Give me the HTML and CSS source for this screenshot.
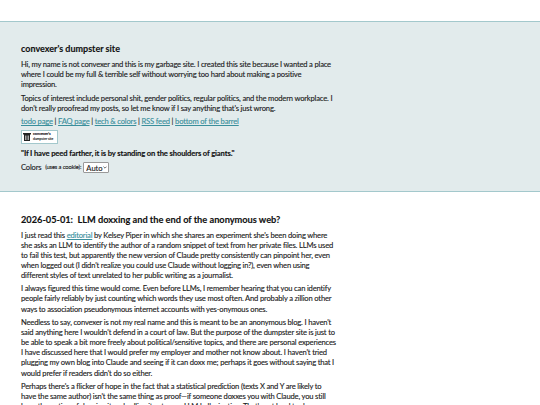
FILE: index.html
```
<!DOCTYPE html>
<html lang="en">
<head>
<meta charset="utf-8">
<title>convexer's dumpster site</title>
<link rel="stylesheet" href="styles.css">
</head>
<body>
<header class="banner">
  <div class="column">
    <h1>convexer's dumpster site</h1>
    <p>Hi, my name is not convexer and this is my garbage site. I created this site because I wanted a place where I could be my full &amp; terrible self without worrying too hard about making a positive impression.</p>
    <p>Topics of interest include personal shit, gender politics, regular politics, and the modern workplace. I don't really proofread my posts, so let me know if I say anything that's just wrong.</p>
    <p><a href="#">todo page</a> | <a href="#">FAQ page</a> | <a href="#">tech &amp; colors</a> | <a href="#">RSS feed</a> | <a href="#">bottom of the barrel</a></p>
    <div class="badge">
      <svg class="badge-icon" viewBox="0 0 8 9" aria-hidden="true"><path d="M0 1h8v1.500H0zM1 2.500h6V9H1z" fill="#222"/><path d="M2.500 3.500v4.500M4 3.500v4.500M5.500 3.500v4.500" stroke="#fff" stroke-width=".6"/></svg>
      <span class="badge-text"><b>convexer's</b><span>dumpster site</span></span>
    </div>
    <p class="motto">"If I have peed farther, it is by standing on the shoulders of giants."</p>
    <p class="colors">Colors <small>(uses a cookie):</small> <span class="picker"><select><option>Auto</option></select><svg class="chevron" viewBox="0 0 6 4" aria-hidden="true"><path d="M.7.7 3 3 5.300.7" fill="none" stroke="#222" stroke-width="1"/></svg></span></p>
  </div>
</header>
<main class="column post">
  <h2>2026-05-01:&nbsp; LLM doxxing and the end of the anonymous web?</h2>
  <p>I just read this <a href="#">editorial</a> by Kelsey Piper in which she shares an experiment she's been doing where she asks an LLM to identify the author of a random snippet of text from her private files. LLMs used to fail this test, but apparently the new version of Claude pretty consistently can pinpoint her, even when logged out (I didn't realize you could use Claude without logging in?), even when using different styles of text unrelated to her public writing as a journalist.</p>
  <p>I always figured this time would come. Even before LLMs, I remember hearing that you can identify people fairly reliably by just counting which words they use most often. And probably a zillion other ways to association pseudonymous internet accounts with yes-onymous ones.</p>
  <p>Needless to say, convexer is not my real name and this is meant to be an anonymous blog. I haven't said anything here I wouldn't defend in a court of law. But the purpose of the dumpster site is just to be able to speak a bit more freely about political/sensitive topics, and there are personal experiences I have discussed here that I would prefer my employer and mother not know about. I haven't tried plugging my own blog into Claude and seeing if it can doxx me; perhaps it goes without saying that I would prefer if readers didn't do so either.</p>
  <p>Perhaps there's a flicker of hope in the fact that a statistical prediction (texts X and Y are likely to have the same author) isn't the same thing as proof&mdash;if someone doxxes you with Claude, you still have the option of denying it and calling it yet more LLM hallucination. That's not hard to do.</p>
</main>
</body>
</html>
```
FILE: styles.css
```
html { overflow: hidden; height: 405px; }
body { margin: 0; padding-top: 21px; background: #fff; color: #1c1c1c; font: 7.6px/10.1px Lato, sans-serif; letter-spacing: -0.18px; -webkit-text-stroke: 0.12px; }
.banner { background: #e2ebec; border-top: 1px solid #a3c8cc; border-bottom: 1px solid #a3c8cc; padding: 21px 0; height: 127px; }
.column { width: 316.5px; margin-left: 21px; }
h1 { margin: 0 0 4px; font-size: 9px; line-height: 12px; color: #111; font-weight: 700; letter-spacing: 0; }
h2 { margin: 0 0 3.5px; font-size: 9.25px; line-height: 13px; color: #111; font-weight: 700; letter-spacing: -0.02px; }
p { margin: 0 0 3.4px; }
a { color: #3a8f9c; }
.badge { display: flex; align-items: center; gap: 2px; width: 37px; height: 14px; box-sizing: border-box; margin: 3px 0 4px; padding: 0 1px; background: #fff; border: 1px solid #a3c8cc; }
.badge-icon { width: 8px; height: 9px; flex: none; }
.badge-text { display: flex; flex-direction: column; font-size: 3.4px; line-height: 4.5px; letter-spacing: 0; white-space: nowrap; }
.badge-text b { font-size: 3.8px; }
.motto { font-weight: 700; color: #111; margin-bottom: 4px; letter-spacing: -0.12px; }
.colors { display: flex; align-items: center; gap: 2px; white-space: pre; }
small { font-size: 5.8px; letter-spacing: -0.12px; }
.picker { position: relative; display: block; width: 26px; height: 11px; }
select { appearance: none; display: block; font: 7.6px Lato, sans-serif; width: 100%; height: 100%; padding: 0 0 0 2px; background: #fff; color: #222; border: 1px solid #999; border-radius: 1px; }
.chevron { position: absolute; right: 2px; top: 4px; width: 4px; height: 3px; pointer-events: none; }
.post { margin-top: 21px; }
```
